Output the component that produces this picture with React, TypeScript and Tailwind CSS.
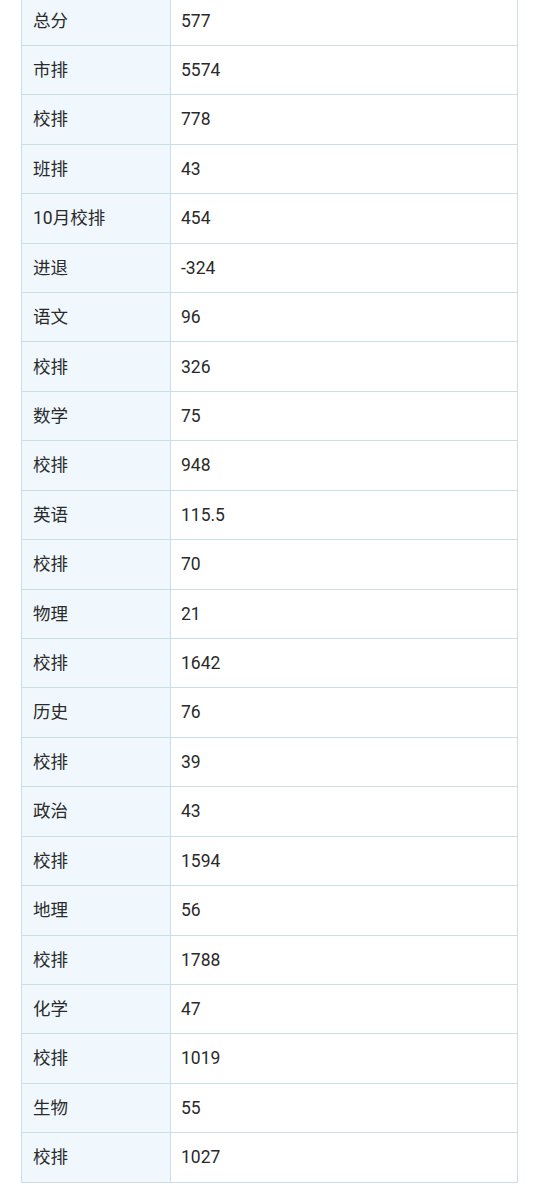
const rows: [string, string][] = [
  ["总分", "577"],
  ["市排", "5574"],
  ["校排", "778"],
  ["班排", "43"],
  ["10月校排", "454"],
  ["进退", "-324"],
  ["语文", "96"],
  ["校排", "326"],
  ["数学", "75"],
  ["校排", "948"],
  ["英语", "115.5"],
  ["校排", "70"],
  ["物理", "21"],
  ["校排", "1642"],
  ["历史", "76"],
  ["校排", "39"],
  ["政治", "43"],
  ["校排", "1594"],
  ["地理", "56"],
  ["校排", "1788"],
  ["化学", "47"],
  ["校排", "1019"],
  ["生物", "55"],
  ["校排", "1027"],
];

export default function App() {
  return (
    <div
      className="w-[538px] h-[1200px] overflow-hidden bg-white"
      style={{ fontFamily: 'Roboto, "Noto Sans CJK SC", sans-serif' }}
    >
      <table className="ml-[21px] mt-[-4.5px] w-[497px] border-collapse text-[17.5px] text-[#2a2a2a]">
        <tbody>
          {rows.map(([k, v], i) => (
            <tr key={i} className="h-[49.43px]">
              <td className="w-[149px] border border-[#c9dfe2] bg-[#f0f8fe] pl-[11px] align-middle">
                {k}
              </td>
              <td className="border border-[#c9dfe2] pl-[10px] align-middle">{v}</td>
            </tr>
          ))}
        </tbody>
      </table>
    </div>
  );
}
